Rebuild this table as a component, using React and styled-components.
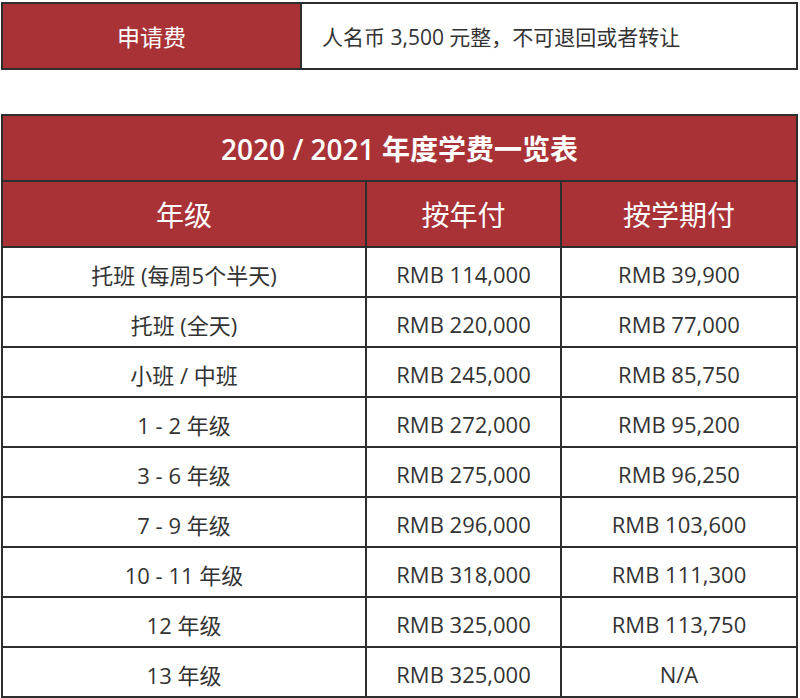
import React from "react";
import styled, { createGlobalStyle } from "styled-components";

const GlobalStyle = createGlobalStyle`
  body {
    margin: 0;
    background: #ffffff;
    font-family: "Open Sans", "Noto Sans CJK SC", sans-serif;
  }
`;

const RED = "#a93237";
const LINE = "#2e2e2e";

const rows = [
  ["托班 (每周5个半天)", "RMB 114,000", "RMB 39,900"],
  ["托班 (全天)", "RMB 220,000", "RMB 77,000"],
  ["小班 / 中班", "RMB 245,000", "RMB 85,750"],
  ["1 - 2 年级", "RMB 272,000", "RMB 95,200"],
  ["3 - 6 年级", "RMB 275,000", "RMB 96,250"],
  ["7 - 9 年级", "RMB 296,000", "RMB 103,600"],
  ["10 - 11 年级", "RMB 318,000", "RMB 111,300"],
  ["12 年级", "RMB 325,000", "RMB 113,750"],
  ["13 年级", "RMB 325,000", "N/A"],
];

const App = () => {
  return (
    <Page>
      <GlobalStyle />
      <FeeBox>
        <FeeLabel>申请费</FeeLabel>
        <FeeValue>人名币 3,500 元整，不可退回或者转让</FeeValue>
      </FeeBox>
      <Table>
        <Title>2020 / 2021 年度学费一览表</Title>
        <HeadCell>年级</HeadCell>
        <HeadCell>按年付</HeadCell>
        <HeadCell>按学期付</HeadCell>
        {rows.map((r) =>
          r.map((cell, i) => <Cell key={r[0] + i}>{cell}</Cell>)
        )}
      </Table>
    </Page>
  );
};

const Page = styled.div`
  padding: 2px 2px 0 1px;
`;

const FeeBox = styled.div`
  display: grid;
  grid-template-columns: 297px 1fr;
  gap: 2px;
  padding: 2px;
  background: ${LINE};
  height: 64px;
`;

const FeeLabel = styled.div`
  background: ${RED};
  color: #fff;
  font-size: 23px;
  display: flex;
  align-items: center;
  justify-content: center;
`;

const FeeValue = styled.div`
  background: #fff;
  color: #333;
  font-size: 21px;
  display: flex;
  align-items: center;
  padding-left: 20px;
`;

const Table = styled.div`
  margin-top: 44px;
  display: grid;
  grid-template-columns: 362px 193px 1fr;
  grid-template-rows: 64px 64px;
  grid-auto-rows: 48px;
  gap: 2px;
  padding: 2px;
  background: ${LINE};
`;

const Title = styled.div`
  grid-column: 1 / -1;
  background: ${RED};
  color: #fff;
  font-size: 28px;
  font-weight: 600;
  display: flex;
  align-items: center;
  justify-content: center;
`;

const HeadCell = styled.div`
  background: ${RED};
  color: #fff;
  font-size: 28px;
  display: flex;
  align-items: center;
  justify-content: center;
`;

const Cell = styled.div`
  background: #fff;
  color: #333;
  font-size: 22px;
  padding-top: 3px;
  display: flex;
  align-items: center;
  justify-content: center;
`;

export default App;
